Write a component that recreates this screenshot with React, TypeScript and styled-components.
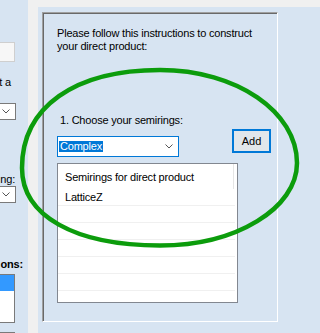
import React from 'react';
import styled, { createGlobalStyle } from 'styled-components';

const GlobalStyle = createGlobalStyle`
  html, body {
    margin: 0;
    padding: 0;
    background: #f0f0f0;
  }
  body {
    font-family: "Liberation Sans", Arial, sans-serif;
    font-size: 11px;
    letter-spacing: -0.2px;
    color: #000;
  }
`;

const Screen = styled.div`
  position: relative;
  display: flex;
  width: 320px;
  height: 333px;
  overflow: hidden;
  background: #f0f0f0;
`;

const SidePanel = styled.div`
  flex: none;
  width: 28px;
  background: #d7e4f2;
  overflow: hidden;
  display: flex;
  flex-direction: column;
  align-items: flex-end;
`;

const SideText = styled.div<{ $top: number; $right: number; $bold?: boolean }>`
  flex: none;
  margin: ${(p) => p.$top}px ${(p) => p.$right}px 0 0;
  line-height: 13px;
  white-space: nowrap;
  font-weight: ${(p) => (p.$bold ? 700 : 400)};
`;

const SideField = styled.div<{ $top: number }>`
  flex: none;
  box-sizing: border-box;
  width: 90px;
  height: 20px;
  margin: ${(p) => p.$top}px 13px 0 0;
  background: #f7f7f7;
  border: 1px solid #cfcfcf;
`;

const SideCombo = styled.div<{ $top: number }>`
  flex: none;
  box-sizing: border-box;
  width: 90px;
  height: 17px;
  margin: ${(p) => p.$top}px 12px 0 0;
  background: #fff;
  border: 1px solid #7a7a7a;
  display: flex;
  align-items: center;
  justify-content: flex-end;
  padding-right: 5px;
`;

const SideList = styled.div<{ $top: number; $height: number }>`
  flex: none;
  box-sizing: border-box;
  width: 90px;
  height: ${(p) => p.$height}px;
  margin: ${(p) => p.$top}px 13px 0 0;
  background: #fff;
  border: 1px solid #7a7a7a;
`;

const SideListItem = styled.div<{ $selected?: boolean }>`
  height: 16px;
  background: ${(p) => (p.$selected ? '#3399ff' : 'transparent')};
`;

const MainPanel = styled.div`
  flex: 1;
  margin: 7px 0 0 10px;
  padding: 5px 0 0 4px;
  background: #d7e4f2;
`;

const GroupBox = styled.div`
  box-sizing: border-box;
  width: 236px;
  height: 310px;
  padding: 14px 0 0 14px;
  border-top: 1px solid #a0a0a0;
  border-left: 1px solid #a0a0a0;
  border-right: 1px solid #fff;
  border-bottom: 1px solid #fff;
  box-shadow: inset 1px 1px 0 #696969;
`;

const Intro = styled.div`
  line-height: 13px;
`;

const Controls = styled.div`
  display: flex;
  align-items: flex-start;
  margin-top: 61px;
`;

const PickColumn = styled.div`
  flex: none;
  width: 122px;
  display: flex;
  flex-direction: column;
`;

const StepLabel = styled.div`
  padding-left: 3px;
  line-height: 13px;
  white-space: nowrap;
`;

const Combo = styled.div`
  box-sizing: border-box;
  width: 122px;
  height: 21px;
  margin-top: 9px;
  padding: 0 5px 0 1px;
  background: #fff;
  border: 1px solid #0078d7;
  display: flex;
  align-items: center;
`;

const SelectedText = styled.span`
  padding: 0 1px;
  line-height: 11px;
  height: 11px;
  background: #0078d7;
  color: #fff;
`;

const Chevron = styled.svg`
  margin-left: auto;
  flex: none;
`;

const AddButton = styled.button`
  box-sizing: border-box;
  width: 39px;
  height: 24px;
  margin: 15px 0 0 53px;
  padding: 0;
  border: 2px solid #0078d7;
  background: #e1e6eb;
  font: inherit;
  color: #000;
`;

const ListView = styled.div`
  box-sizing: border-box;
  width: 181px;
  height: 140px;
  margin-top: 6px;
  background: #fff;
  border: 1px solid #828790;
  overflow: hidden;
`;

const HeaderCell = styled.div`
  box-sizing: border-box;
  width: 176px;
  height: 25px;
  padding-left: 7px;
  border-right: 1px solid #e5e5e5;
  display: flex;
  align-items: center;
  white-space: nowrap;
`;

const Row = styled.div`
  box-sizing: border-box;
  width: 177px;
  height: 17px;
  padding-left: 7px;
  border-bottom: 1px solid #f0f0f0;
  line-height: 16px;
  white-space: nowrap;
`;

const Overlay = styled.svg`
  position: absolute;
  left: 0;
  top: 0;
  pointer-events: none;
`;

const ChevronIcon = ({ width = 8 }: { width?: number }) => (
  <Chevron width={width} height={5} viewBox="0 0 8 5">
    <path d="M0.5 0.5 L4 4 L7.5 0.5" fill="none" stroke="#555" strokeWidth="1" />
  </Chevron>
);

const rows = ['LatticeZ', '', '', '', '', '', ''];

const App = () => {
  return (
    <>
      <GlobalStyle />
      <Screen>
        <SidePanel>
          <SideField $top={42} />
          <SideText $top={14} $right={17}>
            t a
          </SideText>
          <SideCombo $top={14}>
            <ChevronIcon />
          </SideCombo>
          <SideText $top={53} $right={13}>
            ng:
          </SideText>
          <SideCombo $top={0}>
            <ChevronIcon />
          </SideCombo>
          <SideText $top={55} $right={5} $bold>
            ons:
          </SideText>
          <SideList $top={3} $height={49}>
            <SideListItem $selected />
          </SideList>
          <SideList $top={9} $height={20} />
        </SidePanel>
        <MainPanel>
          <GroupBox>
            <Intro>
              Please follow this instructions to construct
              <br />
              your direct product:
            </Intro>
            <Controls>
              <PickColumn>
                <StepLabel>1. Choose your semirings:</StepLabel>
                <Combo>
                  <SelectedText>Complex</SelectedText>
                  <ChevronIcon />
                </Combo>
              </PickColumn>
              <AddButton>Add</AddButton>
            </Controls>
            <ListView>
              <HeaderCell>Semirings for direct product</HeaderCell>
              {rows.map((r, i) => (
                <Row key={i}>{r}</Row>
              ))}
            </ListView>
          </GroupBox>
        </MainPanel>
        <Overlay width={320} height={333} viewBox="0 0 320 333">
          <path
            d="M160 70 C236.7 70 297 111.9 297 163 C297 208 236.7 245.5 160 245.5 C74.4 245.5 22 215.7 22 168 C22 107.2 74.4 70 160 70 Z"
            fill="none"
            stroke="#0c9c0c"
            strokeWidth="4.5"
          />
        </Overlay>
      </Screen>
    </>
  );
};

export default App;
